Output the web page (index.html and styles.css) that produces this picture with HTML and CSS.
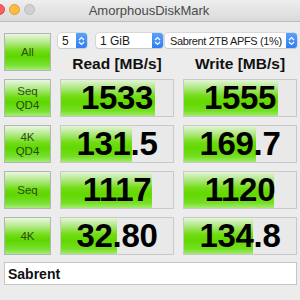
FILE: index.html
```html
<!DOCTYPE html>
<html>
<head>
<meta charset="utf-8">
<link rel="stylesheet" href="styles.css">
</head>
<body>
<div class="window">
  <div class="titlebar">
    <div class="lights">
      <span class="light red"></span>
      <span class="light yellow"></span>
      <span class="light grey"></span>
    </div>
    <span class="title">AmorphousDiskMark</span>
  </div>
  <div class="content">
    <div class="top">
      <div class="btn all">All</div>
      <div class="topright">
        <div class="selects">
          <div class="select s-count"><span class="val">5</span><span class="stepper"><svg width="7" height="10" viewBox="0 0 7 10"><path d="M1 4 L3.5 1.5 L6 4 M1 6 L3.5 8.5 L6 6" fill="none" stroke="#fff" stroke-width="1.2"/></svg></span></div>
          <div class="select s-size"><span class="val">1 GiB</span><span class="stepper"><svg width="7" height="10" viewBox="0 0 7 10"><path d="M1 4 L3.5 1.5 L6 4 M1 6 L3.5 8.5 L6 6" fill="none" stroke="#fff" stroke-width="1.2"/></svg></span></div>
          <div class="select s-drive"><span class="val">Sabrent 2TB APFS (1%)</span><span class="stepper"><svg width="7" height="10" viewBox="0 0 7 10"><path d="M1 4 L3.5 1.5 L6 4 M1 6 L3.5 8.5 L6 6" fill="none" stroke="#fff" stroke-width="1.2"/></svg></span></div>
        </div>
        <div class="heads">
          <div class="head">Read [MB/s]</div>
          <div class="head">Write [MB/s]</div>
        </div>
      </div>
    </div>
    <div class="grid">
      <div class="btn">Seq<br>QD4</div>
      <div class="cell"><div class="bar" style="width:84%"></div><span class="num">1533</span></div>
      <div class="cell"><div class="bar" style="width:84%"></div><span class="num">1555</span></div>

      <div class="btn">4K<br>QD4</div>
      <div class="cell"><div class="bar" style="width:63%"></div><span class="num">131.5</span></div>
      <div class="cell"><div class="bar" style="width:64%"></div><span class="num">169.7</span></div>

      <div class="btn">Seq</div>
      <div class="cell"><div class="bar" style="width:81%"></div><span class="num">1117</span></div>
      <div class="cell"><div class="bar" style="width:80%"></div><span class="num">1120</span></div>

      <div class="btn">4K</div>
      <div class="cell"><div class="bar" style="width:50%"></div><span class="num">32.80</span></div>
      <div class="cell"><div class="bar" style="width:62%"></div><span class="num">134.8</span></div>
    </div>
    <div class="field">Sabrent</div>
  </div>
</div>
</body>
</html>
```

FILE: styles.css
```css
html, body {
  margin: 0;
  padding: 0;
}
body {
  width: 300px;
  height: 300px;
  overflow: hidden;
  background: #ececec;
  font-family: "Liberation Sans", Arial, sans-serif;
}
.window {
  width: 300px;
  height: 300px;
  background: #ececec;
}
.titlebar {
  position: relative;
  height: 22px;
  box-sizing: border-box;
  background: linear-gradient(#eeeeee, #dadada);
  border-bottom: 1px solid #bdbdbd;
  display: flex;
  align-items: center;
  justify-content: center;
}
.lights {
  position: absolute;
  left: -6px;
  top: 4px;
  display: flex;
  gap: 4px;
}
.light {
  width: 11px;
  height: 11px;
  border-radius: 50%;
  box-sizing: border-box;
}
.red { background: #fc605c; border: 1px solid #de4a45; }
.yellow { background: #fdbc40; border: 1px solid #dea034; }
.grey { background: #d0d0d0; border: 1px solid #bcbcbc; }
.title {
  font-size: 13px;
  color: #4a4a4a;
  margin-left: -2px;
}
.content {
  padding: 11px 3px 0 4px;
}
.top {
  display: flex;
  height: 38px;
}
.btn {
  box-sizing: border-box;
  width: 47px;
  height: 38px;
  border: 1px solid #b5b5b5;
  background: linear-gradient(#eaf6e2 0%, #b6ea8e 22%, #6fdc14 48%, #5ed600 62%, #78e030 86%, #a6ec78 100%);
  color: #2c4a14;
  font-size: 11.5px;
  line-height: 14px;
  display: flex;
  align-items: center;
  justify-content: center;
  text-align: center;
}
.topright {
  margin-left: 7px;
  display: flex;
  flex-direction: column;
}
.selects {
  display: flex;
  height: 15px;
}
.select {
  box-sizing: border-box;
  height: 15px;
  background: #fff;
  border-radius: 3px;
  box-shadow: 0 0 0 0.5px #c4c4c4, 0 1px 1px rgba(0,0,0,0.12);
  display: flex;
  align-items: center;
  font-size: 12px;
  color: #1a1a1a;
  overflow: hidden;
  white-space: nowrap;
}
.select .val {
  flex: 1;
  min-width: 0;
  overflow: hidden;
  padding-left: 4px;
}
.s-count { width: 29px; }
.s-size { width: 67px; margin-left: 9px; }
.s-drive { width: 132px; margin-left: 2px; font-size: 11px; letter-spacing: -0.35px; }
.s-drive .val { padding-left: 5px; }
.stepper {
  flex: none;
  width: 11px;
  height: 15px;
  background: linear-gradient(#5aa1fa, #2f7ef5);
  display: flex;
  align-items: center;
  justify-content: center;
}
.heads {
  display: flex;
  margin-top: 8px;
  margin-left: 2px;
}
.head {
  width: 114px;
  text-align: center;
  font-weight: bold;
  font-size: 15.5px;
  color: #111;
  line-height: 16px;
}
.head + .head {
  margin-left: 9px;
}
.grid {
  margin-top: 8px;
  display: grid;
  grid-template-columns: 47px 114px 114px;
  grid-auto-rows: 38px;
  column-gap: 9px;
  row-gap: 8px;
}
.cell {
  position: relative;
  box-sizing: border-box;
  border: 1px solid #c9c9c9;
  background: #e9e9e9;
  display: flex;
  align-items: center;
  justify-content: center;
  overflow: hidden;
}
.bar {
  position: absolute;
  left: 0;
  top: 0;
  bottom: 0;
  background: linear-gradient(#e4f4d8 0%, #b4e98a 20%, #72dc14 45%, #62d800 62%, #74df20 85%, #a2ea70 100%);
}
.num {
  position: relative;
  font-weight: bold;
  font-size: 33px;
  color: #000;
  letter-spacing: -0.3px;
}
.field {
  margin-top: 7px;
  box-sizing: border-box;
  width: 293px;
  height: 23px;
  background: #fff;
  border: 1px solid #c6c6c6;
  font-weight: bold;
  font-size: 14px;
  color: #111;
  display: flex;
  align-items: center;
  padding-left: 3px;
}
```
